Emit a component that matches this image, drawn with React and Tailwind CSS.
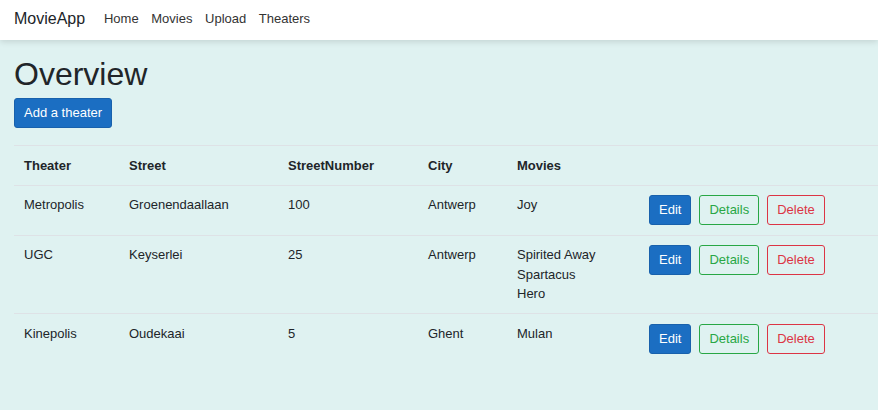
export default function App() {
  const theaters = [
    { name: 'Metropolis', street: 'Groenendaallaan', number: '100', city: 'Antwerp', movies: ['Joy'] },
    { name: 'UGC', street: 'Keyserlei', number: '25', city: 'Antwerp', movies: ['Spirited Away', 'Spartacus', 'Hero'] },
    { name: 'Kinepolis', street: 'Oudekaai', number: '5', city: 'Ghent', movies: ['Mulan'] },
  ];

  return (
    <div className="min-h-[410px] bg-[#dff2f1] font-['Liberation_Sans',Arial,sans-serif] text-[13px] leading-[19.5px] text-[#212529]">
      {/* Navbar */}
      <nav className="h-10 bg-white shadow-[0_2px_6px_rgba(0,0,0,0.12)] flex items-center pl-[14px] pb-[3px]">
        <span className="text-[16px] text-[#212529] mr-[12.5px]">MovieApp</span>
        <ul className="flex">
          {['Home', 'Movies', 'Upload', 'Theaters'].map((l) => (
            <li key={l} className="px-[6.3px] text-[#333]">{l}</li>
          ))}
        </ul>
      </nav>

      {/* Main */}
      <main className="pl-[14px] pt-[15px]">
        <h1 className="text-[32px] leading-[38px] mb-[5px]">Overview</h1>
        <button className="h-[30px] px-[9px] rounded-[3px] bg-[#1b6ec2] border border-[#1861ac] text-white">
          Add a theater
        </button>

        <table className="mt-[17px] w-full table-fixed border-collapse text-left">
          <colgroup>
            <col className="w-[105px]" />
            <col className="w-[159px]" />
            <col className="w-[140px]" />
            <col className="w-[89px]" />
            <col className="w-[132px]" />
            <col />
          </colgroup>
          <thead>
            <tr className="border-t border-[#dee2e6]">
              {['Theater', 'Street', 'StreetNumber', 'City', 'Movies', ''].map((h, i) => (
                <th key={i} className="px-[10px] py-[9.5px] font-bold align-bottom">{h}</th>
              ))}
            </tr>
          </thead>
          <tbody>
            {theaters.map((t) => (
              <tr key={t.name} className="border-t border-[#dee2e6] align-top">
                <td className="px-[10px] py-[9.5px]">{t.name}</td>
                <td className="px-[10px] py-[9.5px]">{t.street}</td>
                <td className="px-[10px] py-[9.5px]">{t.number}</td>
                <td className="px-[10px] py-[9.5px]">{t.city}</td>
                <td className="px-[10px] py-[9.5px]">
                  {t.movies.map((m) => (
                    <div key={m}>{m}</div>
                  ))}
                </td>
                <td className="px-[10px] py-[9.5px]">
                  <div className="flex gap-2">
                    <button className="h-[30px] px-[9px] rounded-[3px] bg-[#1b6ec2] border border-[#1861ac] text-white">Edit</button>
                    <button className="h-[30px] px-[9px] rounded-[3px] border border-[#28a745] text-[#28a745]">Details</button>
                    <button className="h-[30px] px-[9px] rounded-[3px] border border-[#dc3545] text-[#dc3545]">Delete</button>
                  </div>
                </td>
              </tr>
            ))}
          </tbody>
        </table>
      </main>
    </div>
  );
}
